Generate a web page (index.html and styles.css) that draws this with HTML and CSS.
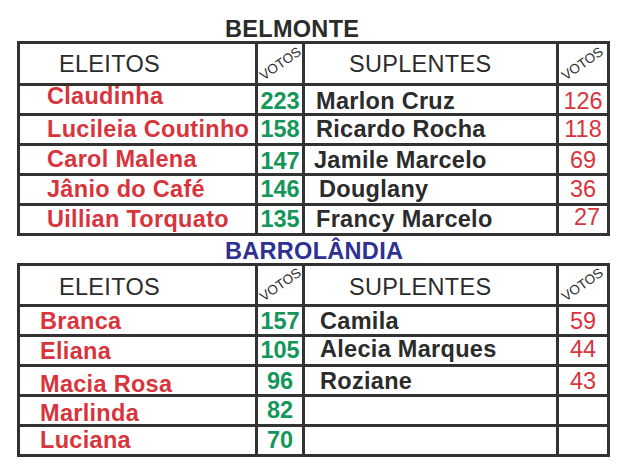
FILE: index.html
```html
<!DOCTYPE html>
<html lang="pt-BR">
<head>
<meta charset="utf-8">
<title>Eleitos e Suplentes</title>
<link rel="stylesheet" href="styles.css">
</head>
<body>
<h2 class="town">BELMONTE</h2>
<div class="sheet sheet-a">
  <div class="cell head">ELEITOS</div>
  <div class="cell vh"><span class="votos">VOTOS</span></div>
  <div class="cell head sup">SUPLENTES</div>
  <div class="cell vh"><span class="votos">VOTOS</span></div>

  <div class="cell name up3">Claudinha</div>
  <div class="cell gv dn2">223</div>
  <div class="cell alt dn2">Marlon Cruz</div>
  <div class="cell rv dn2">126</div>

  <div class="cell name">Lucileia Coutinho</div>
  <div class="cell gv">158</div>
  <div class="cell alt">Ricardo Rocha</div>
  <div class="cell rv">118</div>

  <div class="cell name">Carol Malena</div>
  <div class="cell gv dn2">147</div>
  <div class="cell alt dn1 in-l">Jamile Marcelo</div>
  <div class="cell rv dn1">69</div>

  <div class="cell name">Jânio do Café</div>
  <div class="cell gv">146</div>
  <div class="cell alt in-r">Douglany</div>
  <div class="cell rv">36</div>

  <div class="cell name">Uillian Torquato</div>
  <div class="cell gv">135</div>
  <div class="cell alt">Francy Marcelo</div>
  <div class="cell rv up2 nudge">27</div>
</div>

<h2 class="town town-blue">BARROLÂNDIA</h2>
<div class="sheet sheet-b">
  <div class="cell head">ELEITOS</div>
  <div class="cell vh"><span class="votos">VOTOS</span></div>
  <div class="cell head sup">SUPLENTES</div>
  <div class="cell vh"><span class="votos">VOTOS</span></div>

  <div class="cell name wide dn1">Branca</div>
  <div class="cell gv dn1">157</div>
  <div class="cell alt wide dn1">Camila</div>
  <div class="cell rv dn1">59</div>

  <div class="cell name wide dn1">Eliana</div>
  <div class="cell gv">105</div>
  <div class="cell alt wide up1">Alecia Marques</div>
  <div class="cell rv up1">44</div>

  <div class="cell name wide dn4">Macia Rosa</div>
  <div class="cell gv dn1">96</div>
  <div class="cell alt wide dn1">Roziane</div>
  <div class="cell rv dn1">43</div>

  <div class="cell name wide dn3">Marlinda</div>
  <div class="cell gv">82</div>
  <div class="cell alt wide"></div>
  <div class="cell rv"></div>

  <div class="cell name wide">Luciana</div>
  <div class="cell gv">70</div>
  <div class="cell alt wide"></div>
  <div class="cell rv"></div>
</div>
</body>
</html>
```

FILE: styles.css
```css
* {
  box-sizing: border-box;
}

html, body {
  background: #ffffff;
}

body {
  margin: 0;
  padding-top: 17px;
  width: 624px;
  height: 466px;
  overflow: hidden;
  font-family: "Liberation Sans", Arial, sans-serif;
}

.town {
  margin: 0;
  padding-left: 225px;
  font-size: 23.5px;
  line-height: 24px;
  font-weight: bold;
  letter-spacing: 0.3px;
  color: #2b2b2b;
}

.town-blue {
  margin-top: 4px;
  line-height: 23px;
  color: #2e3192;
}

.sheet {
  display: grid;
  margin-left: 17px;
  width: 593px;
  grid-template-columns: 235px 44px 251px 48px;
  gap: 3px;
  padding: 3px;
  background: #333333;
}

.sheet-a {
  grid-template-rows: 39px repeat(5, 27px);
}

.sheet-b {
  grid-template-rows: 38px repeat(5, 27px);
}

.cell {
  background: #ffffff;
  font-size: 23.5px;
  line-height: 27px;
  letter-spacing: 0.3px;
  white-space: nowrap;
  overflow: visible;
}

.head {
  padding-left: 39px;
  padding-top: 1px;
  line-height: 39px;
  color: #2b2b2b;
}

.sheet-b .head {
  line-height: 38px;
  padding-top: 1.5px;
}

.head.sup {
  padding-left: 44px;
}

.vh {
  display: flex;
  align-items: center;
  justify-content: center;
}

.votos {
  display: block;
  font-size: 13.5px;
  line-height: 1;
  letter-spacing: 0;
  color: #2b2b2b;
  transform: rotate(-35deg);
}

.name {
  padding-left: 27px;
  font-weight: bold;
  color: #d8343c;
}

.name.wide {
  padding-left: 20px;
}

.gv {
  text-align: center;
  font-weight: bold;
  letter-spacing: 0;
  color: #14965a;
}

.alt {
  padding-left: 11px;
  font-weight: bold;
  color: #2b2b2b;
}

.alt.wide {
  padding-left: 15px;
}

.alt.in-l {
  padding-left: 9px;
}

.alt.in-r {
  padding-left: 14px;
}

.rv {
  text-align: center;
  letter-spacing: 0;
  color: #d8343c;
}

.rv.nudge {
  padding-left: 8px;
}

.dn1 { padding-top: 1px; }
.dn2 { padding-top: 2px; }
.dn3 { padding-top: 3px; }
.dn4 { padding-top: 4px; }
.up1 { line-height: 25px; }
.up2 { line-height: 22px; }
.up3 { line-height: 20px; }
```
